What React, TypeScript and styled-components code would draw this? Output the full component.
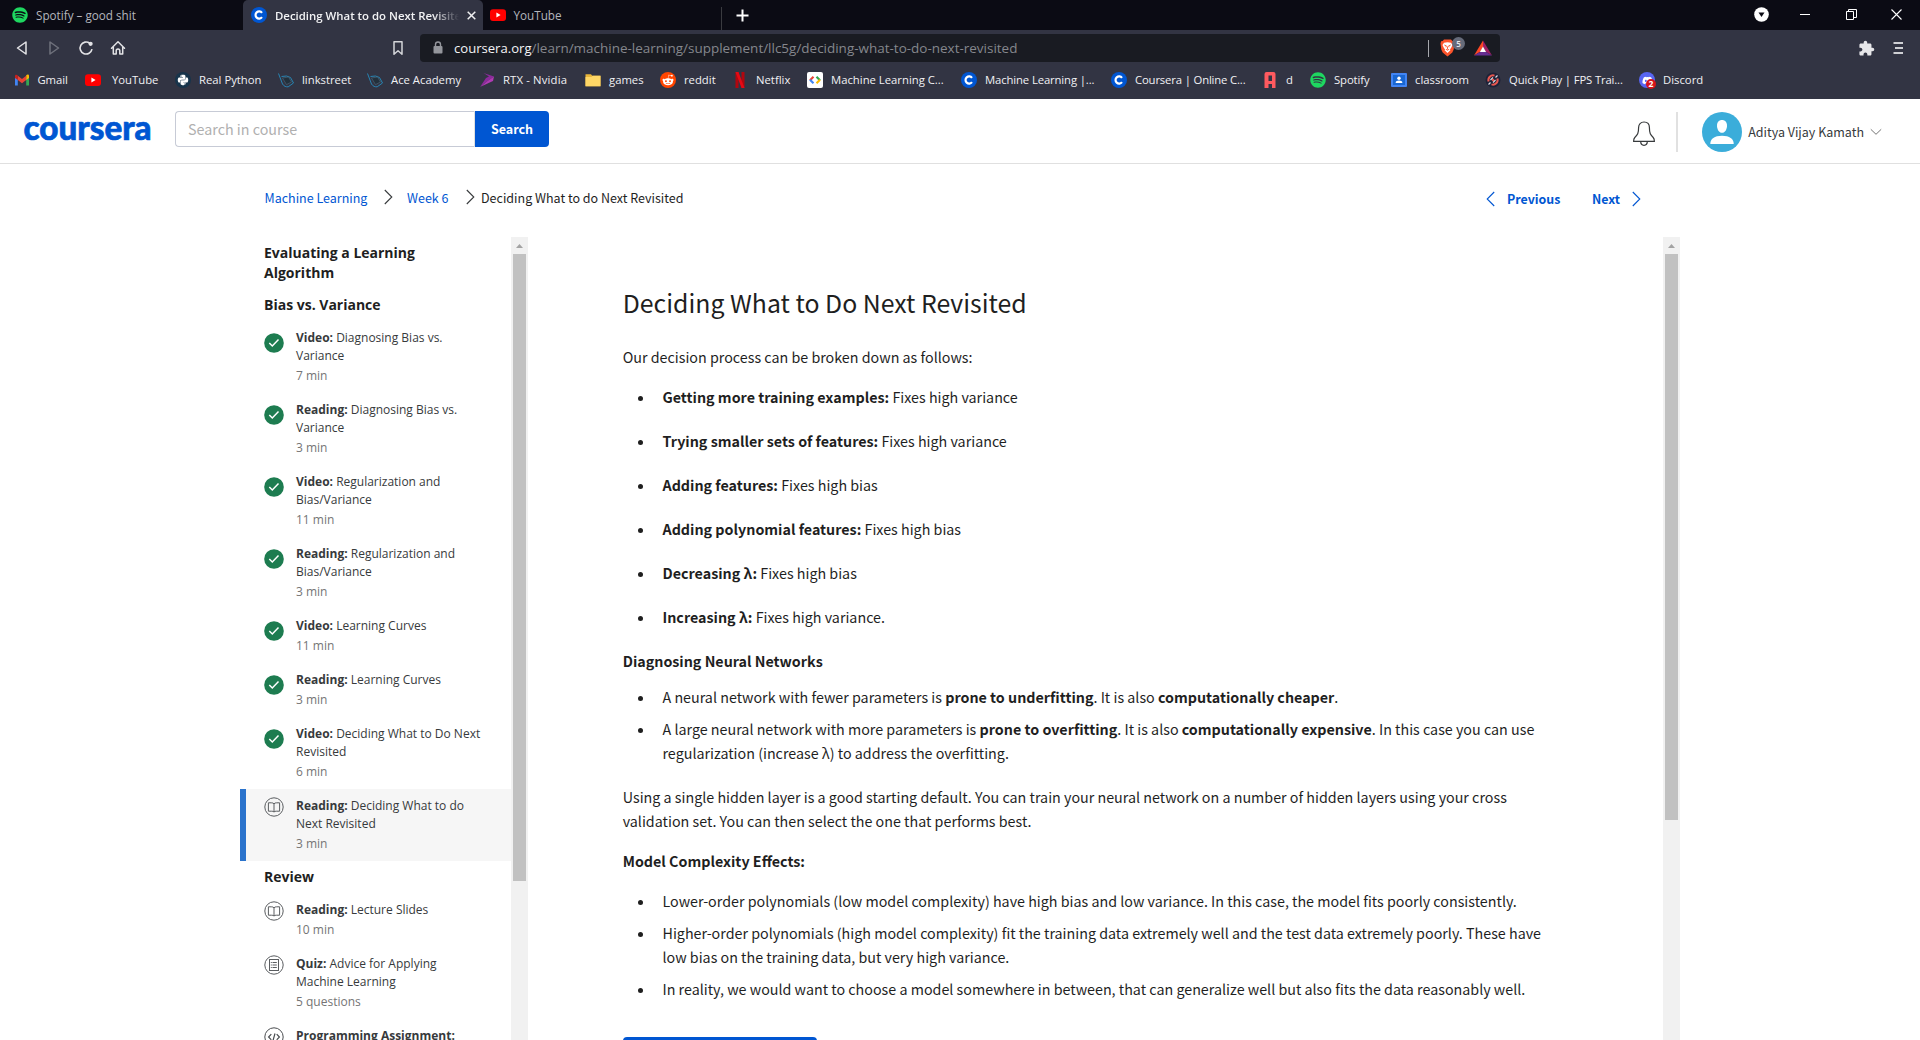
import React from 'react';
import styled, { createGlobalStyle } from 'styled-components';
import { FaSpotify, FaPython, FaRedditAlien, FaDiscord } from 'react-icons/fa';
import { MdExtension } from 'react-icons/md';

const BLUE = '#0056d2';
const SOURCE = `"Noto Sans CJK JP", "Noto Sans", sans-serif`;
const OPEN = `"Open Sans", "Noto Sans", sans-serif`;

const Global = createGlobalStyle`
  *, *::before, *::after { box-sizing: border-box; }
  html, body { margin: 0; padding: 0; background: #fff; overflow: hidden; }
  svg { display: block; flex: none; }
`;

const Window = styled.div`
  display: flex;
  flex-direction: column;
  width: 1920px;
  height: 1040px;
  overflow: hidden;
  white-space: nowrap;
  font-family: ${SOURCE};
  color: #1f1f1f;
`;

/* ---------- browser chrome ---------- */

const TabStrip = styled.div`
  display: flex;
  flex: none;
  height: 30px;
  background: #0b0b14;
  font: 400 11.7px/29px ${OPEN};
  color: #b4b6bd;
`;

const Tab = styled.div<{ $width: number; $active?: boolean }>`
  display: flex;
  align-items: center;
  flex: none;
  width: ${p => p.$width}px;
  padding: 0 ${p => (p.$active ? 6 : 0)}px 0 ${p => (p.$active ? 8 : 0)}px;
  gap: 8px;
  border-radius: 5px 5px 0 0;
  background: ${p => (p.$active ? '#323443' : 'transparent')};
`;

const ActiveTitle = styled.span`
  width: 184px;
  overflow: hidden;
  font-size: 11.4px;
  font-weight: 600;
  color: #f2f2f4;
  mask-image: linear-gradient(90deg, #000 86%, transparent 100%);
`;

const TabGutter = styled.div<{ $width: number }>`
  flex: none;
  width: ${p => p.$width}px;
`;

const TabDivider = styled.div`
  align-self: flex-end;
  width: 1px;
  height: 23px;
  background: #3a3b40;
`;

const NewTab = styled.div`
  display: flex;
  align-items: center;
  padding-left: 14px;
`;

const WindowButtons = styled.div`
  display: flex;
  align-items: center;
  margin-left: auto;
  padding: 0 18px 2px 0;
`;

const WinButton = styled.div<{ $gap: number }>`
  margin-left: ${p => p.$gap}px;
`;

const Toolbar = styled.div`
  display: flex;
  align-items: center;
  flex: none;
  height: 36px;
  padding: 0 16px 0 14px;
  background: #323443;
`;

const NavButtons = styled.div`
  display: flex;
  align-items: center;
  gap: 16px;
  flex: none;
  width: 378px;
`;

const AddressBar = styled.div`
  display: flex;
  align-items: center;
  flex: none;
  width: 1080px;
  height: 28px;
  margin-left: 16px;
  padding: 0 8px 0 11px;
  border-radius: 4px;
  background: #191b22;
  font: 400 13.47px/28px ${OPEN};
  color: #85878d;
`;

const Host = styled.span`
  margin-left: 9px;
  font-size: 13.1px;
  color: #f4f4f6;
`;

const AddressDivider = styled.div`
  width: 1px;
  height: 17px;
  margin-left: auto;
  background: #a6a8ad;
`;

const Shield = styled.div`
  position: relative;
  width: 24px;
  margin: 0 10px 0 11px;
`;

const ShieldBadge = styled.span`
  position: absolute;
  left: 12px;
  top: -2px;
  width: 13px;
  height: 13px;
  border-radius: 50%;
  background: #666b7a;
  font: 600 8px/13px ${OPEN};
  text-align: center;
  color: #e8e8ec;
`;

const ToolbarEnd = styled.div`
  display: flex;
  align-items: center;
  gap: 18px;
  margin-left: auto;
`;

const Bookmarks = styled.div`
  display: flex;
  flex: none;
  height: 33px;
  padding: 0 0 5px 14px;
  background: #323443;
  font: 400 11.3px/28px ${OPEN};
  color: #f1f1f4;
`;

const Bookmark = styled.div<{ $width: number; $gap?: number; $tracking?: number }>`
  display: flex;
  align-items: center;
  flex: none;
  gap: ${p => p.$gap ?? 8}px;
  width: ${p => p.$width}px;
  letter-spacing: ${p => p.$tracking ?? 0}px;
`;

const Favicon = styled.span<{ $bg?: string; $radius?: string }>`
  display: flex;
  align-items: center;
  justify-content: center;
  flex: none;
  position: relative;
  width: 16px;
  height: 16px;
  border-radius: ${p => p.$radius ?? '0'};
  background: ${p => p.$bg ?? 'transparent'};
`;

const DiscordCount = styled.span`
  position: absolute;
  right: -1px;
  bottom: -1px;
  width: 10px;
  height: 10px;
  border-radius: 50%;
  background: #d6141b;
  font: 700 8.5px/10px ${OPEN};
  text-align: center;
  color: #fff;
`;

/* ---------- page header ---------- */

const Header = styled.header`
  display: flex;
  flex: none;
  height: 65px;
  padding: 12px 38px 0 22px;
  border-bottom: 1px solid #e0e0e0;
`;

const Logo = styled.svg`
  overflow: visible;
`;

const LogoText = styled.text`
  font: 900 35px "Lato", ${OPEN};
  fill: ${BLUE};
  stroke: ${BLUE};
  stroke-width: 0.7px;
`;

const SearchForm = styled.div`
  display: flex;
  height: 36px;
  margin-left: 22px;
`;

const SearchInput = styled.div`
  width: 300px;
  padding-left: 12px;
  border: 1px solid #c7cbd6;
  border-right-color: #e0e0e0;
  border-radius: 4px 0 0 4px;
  font-size: 14.3px;
  line-height: 34px;
  color: #b0b0b0;
`;

const SearchButton = styled.div`
  width: 74px;
  border-radius: 0 4px 4px 0;
  background: ${BLUE};
  font-size: 12.5px;
  font-weight: 700;
  line-height: 35px;
  text-align: center;
  color: #fff;
`;

const Account = styled.div`
  display: flex;
  align-items: center;
  height: 42px;
  margin-left: auto;
`;

const Bell = styled.div`
  padding-top: 3px;
`;

const HeaderRule = styled.div`
  width: 2px;
  height: 40px;
  margin: 0 24px 0 21px;
  background: #e1e1e1;
`;

const UserName = styled.span`
  margin: 0 6px 1px 6px;
  font-size: 12.5px;
  color: #373a3c;
`;

/* ---------- course navigation ---------- */

const CourseBar = styled.nav`
  display: flex;
  flex: none;
  height: 73px;
  padding: 22px 279px 0 264px;
  font-size: 12.5px;
  line-height: 21px;
`;

const Crumbs = styled.div`
  display: flex;
  align-items: center;
  height: 22px;
`;

const CrumbLink = styled.span<{ $width: number }>`
  width: ${p => p.$width}px;
  padding-left: 0.5px;
  color: ${BLUE};
`;

const CrumbGap = styled.span<{ $width: number }>`
  width: ${p => p.$width}px;
`;

const Pager = styled.div`
  display: flex;
  align-items: center;
  height: 26px;
  margin-left: auto;
  font-size: 12.4px;
  font-weight: 700;
  color: ${BLUE};
`;

const PagerLabel = styled.span<{ $width: number }>`
  width: ${p => p.$width}px;
`;

/* ---------- body ---------- */

const Body = styled.div`
  display: flex;
  flex: none;
  height: 809px;
  padding-left: 240px;
`;

const Sidebar = styled.aside`
  flex: none;
  width: 271px;
  font-family: ${OPEN};
`;

const GroupTitle = styled.div`
  padding: 6px 0 6px 24px;
  font-size: 14px;
  font-weight: 700;
  line-height: 20px;
  color: #1f1f1f;
`;

const Item = styled.div<{ $active?: boolean }>`
  display: flex;
  gap: 12px;
  padding: 8px 0 8px ${p => (p.$active ? 18 : 24)}px;
  border-left: ${p => (p.$active ? '6px solid #2a73cc' : '0')};
  background: ${p => (p.$active ? '#f6f6f6' : 'transparent')};
`;

const ItemIcon = styled.div<{ $done: boolean }>`
  height: 20px;
  padding-top: ${p => (p.$done ? 4 : 0)}px;
`;

const ItemText = styled.div`
  font-size: 12px;
  line-height: 18px;
  color: #373a3c;
`;

const Kind = styled.b`
  font-weight: 700;
`;

const Meta = styled.div`
  margin-top: 2px;
  color: #757575;
`;

const ScrollTrack = styled.div`
  display: flex;
  flex-direction: column;
  align-items: center;
  flex: none;
  width: 17px;
  height: 809px;
  background: #f1f1f1;
`;

const ScrollArrow = styled.div`
  display: flex;
  align-items: center;
  justify-content: center;
  flex: none;
  width: 17px;
  height: 17px;
`;

const ScrollThumb = styled.div<{ $height: number }>`
  flex: none;
  width: 13px;
  height: ${p => p.$height}px;
  margin-bottom: auto;
  background: #c1c1c1;
`;

const Reading = styled.main`
  flex: none;
  width: 1135px;
  height: 809px;
  padding: 47px 0 0 94.7px;
  overflow: hidden;
  font-size: 14.31px;
  line-height: 24px;
`;

const Title = styled.h1`
  margin: 0 0 25px;
  font-size: 24.85px;
  font-weight: 400;
  line-height: 36px;
`;

const Paragraph = styled.p<{ $after: number }>`
  margin: 0 0 ${p => p.$after}px;
`;

const Subhead = styled.h2<{ $after: number }>`
  margin: 0 0 ${p => p.$after}px;
  font-size: 14.3px;
  font-weight: 700;
  line-height: 24px;
`;

const List = styled.ul<{ $gap: number; $after: number }>`
  display: flex;
  flex-direction: column;
  gap: ${p => p.$gap}px;
  margin: 0 0 ${p => p.$after}px;
  padding: 0;
  list-style: none;
`;

const Point = styled.li`
  display: flex;
  padding-left: 15.3px;

  &::before {
    content: '';
    flex: none;
    width: 5px;
    height: 5px;
    margin: 11px 19.5px 0 0;
    border-radius: 50%;
    background: #1f1f1f;
  }
`;

const CompleteButton = styled.div`
  width: 194px;
  height: 44px;
  border-radius: 4px;
  background: ${BLUE};
`;

/* ---------- icons ---------- */

const SpotifyIcon = () => <FaSpotify size={16} color="#1ed760" />;

const YoutubeIcon = () => (
  <svg width="16" height="16" viewBox="0 0 16 16">
    <rect x="0" y="2.3" width="16" height="11.6" rx="3" fill="#f00" />
    <path d="M6.4 5.6v5l4.2-2.5z" fill="#fff" />
  </svg>
);

const CourseraIcon = () => (
  <svg width="16" height="16" viewBox="0 0 16 16">
    <circle cx="8" cy="8" r="8" fill={BLUE} />
    <path d="M11 10.2A3.6 3.6 0 1 1 11 5.8" fill="none" stroke="#fff" strokeWidth="2.2" />
  </svg>
);

const GmailIcon = () => (
  <svg width="16" height="16" viewBox="0 0 16 16">
    <path d="M1 4v9.5h2.8V7z" fill="#4285f4" />
    <path d="M15 4v9.5h-2.8V7z" fill="#34a853" />
    <path d="M12.2 4v4L15 6V4c0-1.5-1.6-1.8-2.8-.8z" fill="#fbbc04" />
    <path d="M3.8 3.7 8 6.9l4.2-3.2V8L8 11.2 3.8 8z" fill="#ea4335" />
    <path d="M1 4v2l2.8 2V3.4C2.500 2.300 1 2.700 1 4z" fill="#c5221f" />
  </svg>
);

const PhoneSketchIcon = () => (
  <svg width="16" height="16" viewBox="0 0 16 16" fill="none">
    <path d="M.5 1.500 4.500 12c1.500 2.400 3.500 3 5.700 2.800L15.500 11 12.500 5.500 8.500 4 3.500 4.500" stroke="#2784b3" strokeWidth="1" />
    <path d="m4.500 6 6-1 3 5-5 2.600z" fill="#22303c" stroke="#4b6a7c" strokeWidth=".6" />
  </svg>
);

const RtxIcon = () => (
  <svg width="16" height="16" viewBox="0 0 16 16">
    <path d="M4.500 1 15 4.600 8.500 9 1 15l6-9 3-1.500z" fill="#8c2a9c" />
    <path d="M15 4.600 14 9 1.500 14.800 8.500 9z" fill="#b03bb4" />
  </svg>
);

const FolderIcon = () => (
  <svg width="16" height="16" viewBox="0 0 16 16">
    <path d="M.5 2.200h5.500l1.200 1.500h8.300v10.500H.5z" fill="#e9b53a" />
    <path d="M.5 5h6l1-1.200h8v10.400H.5z" fill="#ffd766" />
  </svg>
);

const NetflixIcon = () => (
  <svg width="16" height="16" viewBox="0 0 16 16">
    <path d="M3.500 0h3v16h-3zM9.500 0h3v16h-3z" fill="#b1060f" />
    <path d="M3.500 0h3l6 16h-3z" fill="#e50914" />
  </svg>
);

const CodeCourseIcon = () => (
  <svg width="14" height="14" viewBox="0 0 14 14" fill="none" strokeWidth="2.200">
    <path d="M5.500 3.700 2 7.200" stroke="#ea4335" />
    <path d="M2 6.800 5.500 10.300" stroke="#4285f4" />
    <path d="M8.500 3.700 12 7.200" stroke="#34a853" />
    <path d="M12 6.800 8.500 10.300" stroke="#fbbc04" />
  </svg>
);

const AIcon = () => (
  <svg width="16" height="16" viewBox="0 0 16 16">
    <path
      d="M4.500 0h7A2 2 0 0 1 13.500 2v14H10v-4H6.500v4H2.500V2a2 2 0 0 1 2-2zM6.500 3.500V9H10V3.500z"
      fill="#ff5a5f"
      fillRule="evenodd"
    />
  </svg>
);

const ClassroomIcon = () => (
  <svg width="16" height="16" viewBox="0 0 16 16">
    <rect y="1" width="16" height="14" rx="1" fill="#4285f4" />
    <rect x="2" y="3" width="12" height="10" fill="#1967d2" />
    <circle cx="8" cy="6.300" r="1.700" fill="#fff" />
    <path d="M4.600 11c0-1.700 1.600-2.400 3.400-2.400s3.400.7 3.400 2.400z" fill="#fff" />
  </svg>
);

const AimIcon = () => (
  <svg width="16" height="16" viewBox="0 0 16 16" fill="none">
    <circle cx="8" cy="8" r="7.500" fill="#1d2238" />
    <path d="M3.600 9.500A4.700 4.700 0 0 1 9.500 3.600M12.400 6.500A4.700 4.700 0 0 1 6.500 12.400" stroke="#e8574f" strokeWidth="2" />
    <path d="m3.500 12.500 2-2M10.500 5.500l2-2M5.500 8 8 5.500M8 10.500 10.500 8" stroke="#d9dbe4" strokeWidth="1.200" />
    <circle cx="8" cy="8" r="1.200" fill="#e8574f" />
  </svg>
);

const Triangle = ({ flip }: { flip?: boolean }) => (
  <svg width="16" height="16" viewBox="0 0 16 16" fill="none">
    <path
      d={flip ? 'M4 2 12.500 8 4 14z' : 'M12 2 3.500 8 12 14z'}
      stroke={flip ? '#6f717c' : '#e3e3e6'}
      strokeWidth="1.500"
      strokeLinejoin="round"
    />
  </svg>
);

const ReloadIcon = () => (
  <svg width="16" height="16" viewBox="0 0 16 16" fill="none">
    <path d="M14 9.200A6 6 0 1 1 11.800 3.300" stroke="#e3e3e6" strokeWidth="1.600" />
    <circle cx="12.600" cy="3.800" r="2.100" fill="#e3e3e6" />
  </svg>
);

const HomeIcon = () => (
  <svg width="16" height="16" viewBox="0 0 16 16" fill="none" stroke="#e3e3e6" strokeWidth="1.500" strokeLinejoin="round" strokeLinecap="round">
    <path d="M1.500 8.200 8 1.800l6.500 6.400M3.300 7v7h2.900v-3.200a1.800 1.800 0 0 1 3.600 0V14h2.900V7" />
  </svg>
);

const BookmarkIcon = () => (
  <svg width="12" height="16" viewBox="0 0 12 16" fill="none">
    <path d="M2 1.800h8v12.400L6 10.700l-4 3.500z" stroke="#d4d5d9" strokeWidth="1.500" strokeLinejoin="round" />
  </svg>
);

const LockIcon = () => (
  <svg width="14" height="16" viewBox="0 0 14 16">
    <rect x="2.500" y="6" width="9" height="7.500" rx="1" fill="#94969c" />
    <path d="M4.500 6.500V4.500a2.500 2.500 0 0 1 5 0v2" fill="none" stroke="#94969c" strokeWidth="1.400" />
  </svg>
);

const BraveIcon = () => (
  <svg width="15" height="18" viewBox="0 0 15 18">
    <path d="M4 .6h7L12.300 2l1.600.2.6 2.300-.8 6-1.400 3L7.500 17.400 2.700 13.500l-1.400-3-.8-6 .6-2.300L2.700 2z" fill="#fb542b" />
    <path
      d="M4 3.800 7.500 3.200 11 3.800l1.500 2.300-1.700 3.300-1.200.8 1 .8L7.500 14 4.400 11l1-.8-1.200-.8L2.500 6.100z"
      fill="#fff"
    />
    <path d="m4.300 6 2 .8-.3 1.500M10.700 6l-2 .8.3 1.500M6 10.300l1.500 1 1.500-1M7.500 7.500v3" fill="none" stroke="#fb542b" strokeWidth=".9" />
  </svg>
);

const BatIcon = () => (
  <svg width="18" height="16" viewBox="0 0 18 16">
    <path d="M9 .5 0 15.500l6.200-3.700L9 7z" fill="#ff4724" />
    <path d="M9 .5 18 15.500l-6.200-3.700L9 7z" fill="#9e1f63" />
    <path d="M0 15.500h18l-6.200-3.700H6.200z" fill="#662d91" />
    <path d="M9 6.500 5.900 12h6.200z" fill="#fff" />
  </svg>
);

const MenuIcon = () => (
  <svg width="11" height="16" viewBox="0 0 11 16" stroke="#cfd0d4" strokeWidth="2">
    <path d="M.5 3h9.500M2 8h8M.5 13h9.500" />
  </svg>
);

const BellIcon = () => (
  <svg width="22" height="26" viewBox="0 0 22 26" fill="none" stroke="#373a3c" strokeWidth="1.200" strokeLinejoin="round">
    <path d="M11 1c-3.300 0-5.400 2.300-5.400 5.600C5.600 12.500 4.500 14 1.800 16.500 .8 17.500.6 18.500.6 20.400h20.800c0-1.900-.2-2.900-1.200-3.900-2.700-2.500-3.800-4-3.800-9.900C16.400 3.300 14.300 1 11 1z" />
    <path d="M7.700 20.600c0 2.200 1.400 3.700 3.300 3.700s3.300-1.500 3.300-3.700" />
  </svg>
);

const AvatarIcon = () => (
  <svg width="40" height="40" viewBox="0 0 40 40">
    <circle cx="20" cy="20" r="20" fill="#3badda" />
    <path d="M20 8c3 0 5 2.200 5 5.400 0 4-2 7.400-5 7.400s-5-3.400-5-7.400C15 10.200 17 8 20 8z" fill="#fff" />
    <path d="M8.300 32c0-5.200 4.200-8.200 11.700-8.200S31.700 26.800 31.700 32z" fill="#fff" />
  </svg>
);

const Chevron = ({ dir, color }: { dir: 'left' | 'right'; color: string }) => (
  <svg width="9" height="16" viewBox="0 0 9 16" fill="none" stroke={color} strokeWidth="1.100">
    <path d={dir === 'right' ? 'M.8 1 7.800 8 .8 15' : 'M8.200 1 1.200 8l7 7'} />
  </svg>
);

const ChevronDown = () => (
  <svg width="12" height="8" viewBox="0 0 12 8" fill="none" stroke="#757575">
    <path d="m.8 1.300 5.200 5 5.200-5" />
  </svg>
);

const DoneIcon = () => (
  <svg width="20" height="20" viewBox="0 0 20 20">
    <circle cx="10" cy="10" r="9.800" fill="#1d7c50" />
    <path d="m5.300 10 3 3 6.200-6.400" fill="none" stroke="#fff" strokeWidth="1.500" />
  </svg>
);

const BookIcon = () => (
  <svg width="20" height="20" viewBox="0 0 20 20" fill="none" stroke="#5a5d60">
    <circle cx="10" cy="10" r="9.200" />
    <path d="M10 6.800C9.400 6 8.500 5.800 7.300 5.800H4.400v8.400h2.900c1.300 0 2.200.1 2.700.8.500-.7 1.400-.8 2.700-.8h2.900V5.800h-2.900c-1.200 0-2.100.2-2.700 1zV15" />
  </svg>
);

const QuizIcon = () => (
  <svg width="20" height="20" viewBox="0 0 20 20" fill="none" stroke="#5a5d60">
    <circle cx="10" cy="10" r="9.200" />
    <rect x="5.500" y="4.500" width="9" height="11" />
    <path d="M8.500 7.500h4.300M8.500 10h4.300M8.500 12.500h4.300M6.800 7.500h1M6.800 10h1M6.800 12.500h1" strokeWidth="1.200" />
  </svg>
);

const CodeIcon = () => (
  <svg width="20" height="20" viewBox="0 0 20 20" fill="none" stroke="#4a4d50">
    <circle cx="10" cy="10" r="9.200" />
    <path d="M7.300 7.200 4.600 10l2.700 2.800M12.700 7.200l2.700 2.800-2.700 2.800M11 6.500l-2 7" strokeWidth="1.200" />
  </svg>
);

/* ---------- data ---------- */

type BookmarkData = { label: string; width: number; gap?: number; tracking?: number; icon: React.ReactNode };

const bookmarks: BookmarkData[] = [
  { label: 'Gmail', width: 71, gap: 7.5, tracking: -0.1, icon: <GmailIcon /> },
  { label: 'YouTube', width: 90, gap: 11, icon: <YoutubeIcon /> },
  { label: 'Real Python', width: 103, icon: <Favicon $bg="#17344b" $radius="50%"><FaPython size={12} color="#fff" /></Favicon> },
  { label: 'linkstreet', width: 89, icon: <PhoneSketchIcon /> },
  { label: 'Ace Academy', width: 112, icon: <PhoneSketchIcon /> },
  { label: 'RTX - Nvidia', width: 106, tracking: 0.15, icon: <RtxIcon /> },
  { label: 'games', width: 75, icon: <FolderIcon /> },
  { label: 'reddit', width: 72, icon: <Favicon $bg="#ff4500" $radius="50%"><FaRedditAlien size={12} color="#fff" /></Favicon> },
  { label: 'Netflix', width: 75, icon: <NetflixIcon /> },
  { label: 'Machine Learning C...', width: 154, icon: <Favicon $bg="#fff" $radius="2px"><CodeCourseIcon /></Favicon> },
  { label: 'Machine Learning |...', width: 150, tracking: -0.12, icon: <CourseraIcon /> },
  { label: 'Coursera | Online C...', width: 151, tracking: -0.15, icon: <CourseraIcon /> },
  { label: 'd', width: 48, icon: <AIcon /> },
  { label: 'Spotify', width: 81, tracking: -0.1, icon: <SpotifyIcon /> },
  { label: 'classroom', width: 94, icon: <ClassroomIcon /> },
  { label: 'Quick Play | FPS Trai...', width: 154, tracking: -0.14, icon: <AimIcon /> },
  {
    label: 'Discord',
    width: 80,
    icon: (
      <Favicon $bg="#5865f2" $radius="50%">
        <FaDiscord size={11} color="#fff" />
        <DiscordCount>2</DiscordCount>
      </Favicon>
    ),
  },
];

type Lesson = { kind: string; lines: string[]; meta: string; state: 'done' | 'book' | 'quiz' | 'code'; active?: boolean };

const biasLessons: Lesson[] = [
  { kind: 'Video:', lines: ['Diagnosing Bias vs.', 'Variance'], meta: '7 min', state: 'done' },
  { kind: 'Reading:', lines: ['Diagnosing Bias vs.', 'Variance'], meta: '3 min', state: 'done' },
  { kind: 'Video:', lines: ['Regularization and', 'Bias/Variance'], meta: '11 min', state: 'done' },
  { kind: 'Reading:', lines: ['Regularization and', 'Bias/Variance'], meta: '3 min', state: 'done' },
  { kind: 'Video:', lines: ['Learning Curves'], meta: '11 min', state: 'done' },
  { kind: 'Reading:', lines: ['Learning Curves'], meta: '3 min', state: 'done' },
  { kind: 'Video:', lines: ['Deciding What to Do Next', 'Revisited'], meta: '6 min', state: 'done' },
  { kind: 'Reading:', lines: ['Deciding What to do', 'Next Revisited'], meta: '3 min', state: 'book', active: true },
];

const reviewLessons: Lesson[] = [
  { kind: 'Reading:', lines: ['Lecture Slides'], meta: '10 min', state: 'book' },
  { kind: 'Quiz:', lines: ['Advice for Applying', 'Machine Learning'], meta: '5 questions', state: 'quiz' },
  { kind: 'Programming Assignment:', lines: [''], meta: '', state: 'code' },
];

const stateIcons = { done: <DoneIcon />, book: <BookIcon />, quiz: <QuizIcon />, code: <CodeIcon /> };

const decisions: [string, string][] = [
  ['Getting more training examples:', 'Fixes high variance'],
  ['Trying smaller sets of features:', 'Fixes high variance'],
  ['Adding features:', 'Fixes high bias'],
  ['Adding polynomial features:', 'Fixes high bias'],
  ['Decreasing λ:', 'Fixes high bias'],
  ['Increasing λ:', 'Fixes high variance.'],
];

const LessonRow = ({ lesson }: { lesson: Lesson }) => (
  <Item $active={lesson.active}>
    <ItemIcon $done={lesson.state === 'done'}>{stateIcons[lesson.state]}</ItemIcon>
    <ItemText>
      <div>
        <Kind>{lesson.kind}</Kind> {lesson.lines[0]}
      </div>
      {lesson.lines[1] && <div>{lesson.lines[1]}</div>}
      <Meta>{lesson.meta}</Meta>
    </ItemText>
  </Item>
);

const Scrollbar = ({ thumb }: { thumb: number }) => (
  <ScrollTrack>
    <ScrollArrow>
      <svg width="7" height="4" viewBox="0 0 7 4"><path d="M0 4 3.500 0 7 4z" fill="#a3a3a3" /></svg>
    </ScrollArrow>
    <ScrollThumb $height={thumb} />
    <svg width="7" height="6" viewBox="0 0 7 6"><path d="M0 1h7L3.500 5z" fill="#505050" /></svg>
  </ScrollTrack>
);

export default function App() {
  return (
    <Window>
      <Global />
      <TabStrip>
        <TabGutter $width={12} />
        <Tab $width={231}>
          <SpotifyIcon />
          <span>Spotify – good shit</span>
        </Tab>
        <Tab $width={240} $active>
          <CourseraIcon />
          <ActiveTitle>Deciding What to do Next Revisited</ActiveTitle>
          <svg width="9" height="9" viewBox="0 0 9 9" stroke="#f0f0f2" strokeWidth="1.500">
            <path d="m.7.7 7.600 7.600M8.300.7.700 8.300" />
          </svg>
        </Tab>
        <TabGutter $width={6.5} />
        <Tab $width={231}>
          <YoutubeIcon />
          <span>YouTube</span>
        </Tab>
        <TabDivider />
        <NewTab>
          <svg width="13" height="13" viewBox="0 0 13 13" stroke="#fff" strokeWidth="2">
            <path d="M6.500.5v12M.5 6.500h12" />
          </svg>
        </NewTab>
        <WindowButtons>
          <WinButton $gap={0}>
            <svg width="15" height="15" viewBox="0 0 15 15">
              <circle cx="7.500" cy="7.500" r="7.300" fill="#fff" />
              <path d="M4.500 5.500h6L7.500 10z" fill="#0b0b14" />
            </svg>
          </WinButton>
          <WinButton $gap={31}>
            <svg width="10" height="10" viewBox="0 0 10 10"><path d="M0 5.500h10" stroke="#fff" /></svg>
          </WinButton>
          <WinButton $gap={36}>
            <svg width="11" height="11" viewBox="0 0 11 11" fill="none" stroke="#fff">
              <path d="M.5 2.500h7v8h-7zM2.500 2.500v-2h8v8h-3" />
            </svg>
          </WinButton>
          <WinButton $gap={34}>
            <svg width="11" height="11" viewBox="0 0 11 11" stroke="#fff" strokeWidth="1.100">
              <path d="m.5.5 10 10M10.500.5l-10 10" />
            </svg>
          </WinButton>
        </WindowButtons>
      </TabStrip>

      <Toolbar>
        <NavButtons>
          <Triangle />
          <Triangle flip />
          <ReloadIcon />
          <HomeIcon />
        </NavButtons>
        <BookmarkIcon />
        <AddressBar>
          <LockIcon />
          <Host>coursera.org</Host>
          <span>/learn/machine-learning/supplement/llc5g/deciding-what-to-do-next-revisited</span>
          <AddressDivider />
          <Shield>
            <BraveIcon />
            <ShieldBadge>5</ShieldBadge>
          </Shield>
          <BatIcon />
        </AddressBar>
        <ToolbarEnd>
          <MdExtension size={17} color="#e6e6e9" />
          <MenuIcon />
        </ToolbarEnd>
      </Toolbar>

      <Bookmarks>
        {bookmarks.map(b => (
          <Bookmark key={b.label} $width={b.width} $gap={b.gap} $tracking={b.tracking}>
            {b.icon}
            <span>{b.label}</span>
          </Bookmark>
        ))}
      </Bookmarks>

      <Header>
        <Logo width="131" height="48" viewBox="0 0 131 48">
          <LogoText x="1.500" y="28.700" textLength="128" lengthAdjust="spacingAndGlyphs">coursera</LogoText>
        </Logo>
        <SearchForm>
          <SearchInput>Search in course</SearchInput>
          <SearchButton>Search</SearchButton>
        </SearchForm>
        <Account>
          <Bell>
            <BellIcon />
          </Bell>
          <HeaderRule />
          <AvatarIcon />
          <UserName>Aditya Vijay Kamath</UserName>
          <ChevronDown />
        </Account>
      </Header>

      <CourseBar>
        <Crumbs>
          <CrumbLink $width={119.5}>Machine Learning</CrumbLink>
          <Chevron dir="right" color="#373a3c" />
          <CrumbGap $width={14} />
          <CrumbLink $width={59}>Week 6</CrumbLink>
          <Chevron dir="right" color="#373a3c" />
          <CrumbGap $width={6.5} />
          <span>Deciding What to do Next Revisited</span>
        </Crumbs>
        <Pager>
          <Chevron dir="left" color={BLUE} />
          <CrumbGap $width={12} />
          <PagerLabel $width={85}>Previous</PagerLabel>
          <PagerLabel $width={40}>Next</PagerLabel>
          <Chevron dir="right" color={BLUE} />
        </Pager>
      </CourseBar>

      <Body>
        <Sidebar>
          <GroupTitle>
            Evaluating a Learning
            <br />
            Algorithm
          </GroupTitle>
          <GroupTitle>Bias vs. Variance</GroupTitle>
          {biasLessons.map((l, i) => (
            <LessonRow key={i} lesson={l} />
          ))}
          <GroupTitle>Review</GroupTitle>
          {reviewLessons.map((l, i) => (
            <LessonRow key={i} lesson={l} />
          ))}
        </Sidebar>
        <Scrollbar thumb={627} />
        <Reading>
          <Title>Deciding What to Do Next Revisited</Title>
          <Paragraph $after={16}>Our decision process can be broken down as follows:</Paragraph>
          <List $gap={20} $after={20}>
            {decisions.map(([term, effect]) => (
              <Point key={term}>
                <div>
                  <b>{term}</b> {effect}
                </div>
              </Point>
            ))}
          </List>
          <Subhead $after={12}>Diagnosing Neural Networks</Subhead>
          <List $gap={8} $after={20}>
            <Point>
              <div>
                A neural network with fewer parameters is <b>prone to underfitting</b>. It is also{' '}
                <b>computationally cheaper</b>.
              </div>
            </Point>
            <Point>
              <div>
                A large neural network with more parameters is <b>prone to overfitting</b>. It is also{' '}
                <b>computationally expensive</b>. In this case you can use
                <br />
                regularization (increase λ) to address the overfitting.
              </div>
            </Point>
          </List>
          <Paragraph $after={16}>
            Using a single hidden layer is a good starting default. You can train your neural network on a number of
            hidden layers using your cross
            <br />
            validation set. You can then select the one that performs best.
          </Paragraph>
          <Subhead $after={16}>Model Complexity Effects:</Subhead>
          <List $gap={8} $after={36}>
            <Point>
              <div>
                Lower-order polynomials (low model complexity) have high bias and low variance. In this case, the model
                fits poorly consistently.
              </div>
            </Point>
            <Point>
              <div>
                Higher-order polynomials (high model complexity) fit the training data extremely well and the test data
                extremely poorly. These have
                <br />
                low bias on the training data, but very high variance.
              </div>
            </Point>
            <Point>
              <div>
                In reality, we would want to choose a model somewhere in between, that can generalize well but also fits
                the data reasonably well.
              </div>
            </Point>
          </List>
          <CompleteButton />
        </Reading>
        <Scrollbar thumb={566} />
      </Body>
    </Window>
  );
}
